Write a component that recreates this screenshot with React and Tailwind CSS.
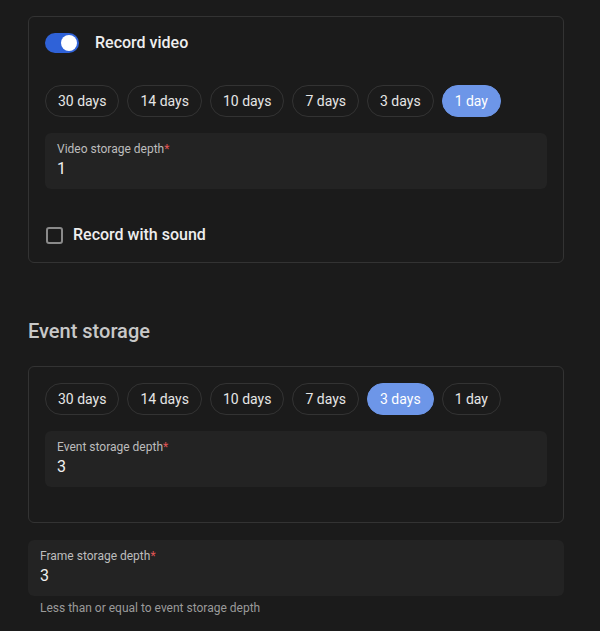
import { useState } from "react";

const PERIODS = [
    { label: "30 days", value: 30 },
    { label: "14 days", value: 14 },
    { label: "10 days", value: 10 },
    { label: "7 days", value: 7 },
    { label: "3 days", value: 3 },
    { label: "1 day", value: 1 },
];

export default function App() {
    const [recordVideo, setRecordVideo] = useState(true);
    const [withSound, setWithSound] = useState(false);
    const [videoDepth, setVideoDepth] = useState(1);
    const [eventDepth, setEventDepth] = useState(3);
    const [frameDepth] = useState(3);

    return (
        <div className="min-h-[631px] bg-[#1b1b1b] pl-[28px] pr-9 pt-4 pb-6 font-['Roboto',sans-serif] text-[#e6e6e6]">
            {/* Video recording */}
            <section className="rounded-md border border-[#333333] px-4 pt-4 pb-[15px]">
                <div className="flex items-center gap-4 h-5">
                    <Toggle checked={recordVideo} onChange={setRecordVideo} />
                    <span className="text-base font-medium text-[#eeeeee]">Record video</span>
                </div>

                <div className="mt-8">
                    <PeriodChips value={videoDepth} onChange={setVideoDepth} />
                </div>

                <div className="mt-4">
                    <Field label="Video storage depth" value={videoDepth} />
                </div>

                <label className="mt-[34px] flex items-center gap-[10px] h-6 cursor-pointer">
                    <span
                        onClick={() => setWithSound(!withSound)}
                        className={`ml-px w-[17px] h-[17px] rounded-[3px] border-2 ${withSound ? "bg-[#6d96e8] border-[#6d96e8]" : "border-[#8a8a8a]"}`}
                    />
                    <span className="text-base font-medium text-[#eeeeee]">Record with sound</span>
                </label>
            </section>

            {/* Events */}
            <h2 className="mt-[54px] text-xl leading-7 font-medium text-[#c8c8c8]">Event storage</h2>

            <section className="mt-[21px] rounded-md border border-[#333333] px-4 pt-4 pb-[35px]">
                <PeriodChips value={eventDepth} onChange={setEventDepth} />
                <div className="mt-4">
                    <Field label="Event storage depth" value={eventDepth} />
                </div>
            </section>

            <div className="mt-[17px]">
                <Field label="Frame storage depth" value={frameDepth} />
                <p className="mt-[4px] px-3 text-xs leading-4 text-[#9a9a9a]">Less than or equal to event storage depth</p>
            </div>
        </div>
    );
}

function Toggle({ checked, onChange }) {
    return (
        <button
            onClick={() => onChange(!checked)}
            className={`relative w-[34px] h-5 rounded-full ${checked ? "bg-[#2f62d8]" : "bg-[#555555]"}`}
        >
            <span
                className={`absolute top-[2px] w-4 h-4 rounded-full bg-white ${checked ? "left-[16px]" : "left-[2px]"}`}
            />
        </button>
    );
}

function PeriodChips({ value, onChange }) {
    return (
        <div className="flex gap-2">
            {PERIODS.map((p) => (
                <button
                    key={p.value}
                    onClick={() => onChange(p.value)}
                    className={`h-8 px-3 rounded-full text-sm ${value === p.value
                        ? "bg-[#6d96e8] border border-[#6d96e8] text-white"
                        : "border border-[#333333] text-[#e6e6e6]"
                        }`}
                >
                    {p.label}
                </button>
            ))}
        </div>
    );
}

function Field({ label, value }) {
    return (
        <div className="rounded-md bg-[#232323] px-3 pt-2 pb-[8px]">
            <div className="text-xs leading-4 text-[#bdbdbd]">
                {label}
                <span className="text-[#e05555]">*</span>
            </div>
            <div className="text-base leading-6 text-[#f0f0f0]">{value}</div>
        </div>
    );
}
